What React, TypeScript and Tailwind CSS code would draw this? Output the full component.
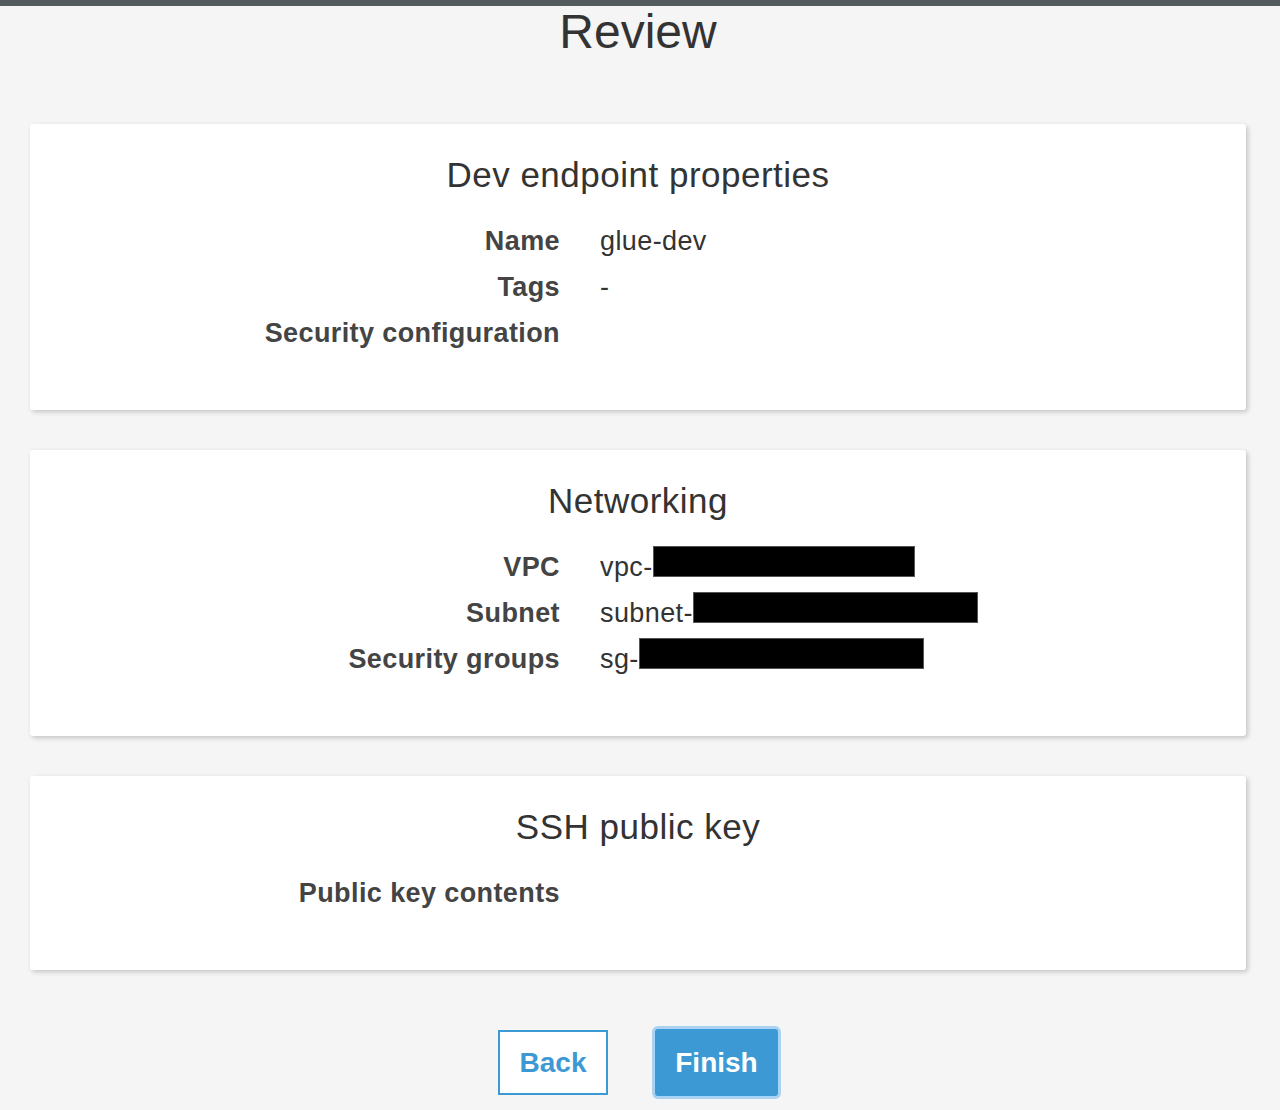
const font = { fontFamily: '"Liberation Sans", Arial, sans-serif' };

type Row = { label: string; value?: string; redact?: number };

const sections: { title: string; rows: Row[] }[] = [
  {
    title: "Dev endpoint properties",
    rows: [
      { label: "Name", value: "glue-dev" },
      { label: "Tags", value: "-" },
      { label: "Security configuration" },
    ],
  },
  {
    title: "Networking",
    rows: [
      { label: "VPC", value: "vpc-", redact: 262 },
      { label: "Subnet", value: "subnet-", redact: 285 },
      { label: "Security groups", value: "sg-", redact: 285 },
    ],
  },
  {
    title: "SSH public key",
    rows: [{ label: "Public key contents" }],
  },
];

function Card({ title, rows }: { title: string; rows: Row[] }) {
  return (
    <div className="bg-white rounded-[3px] shadow-[2px_2px_5px_rgba(0,0,0,0.2)] pt-[31px] pb-[54px]">
      <h2 className="text-center text-[35px] leading-[40px] tracking-[0.5px] text-[#333]">{title}</h2>
      <div className="mt-[23px]">
        {/* rows */}
        {rows.map((r) => (
          <div key={r.label} className="flex items-baseline h-[46px] leading-[46px] text-[27px] tracking-[0.4px]">
            <div className="w-[530px] shrink-0 text-right font-bold text-[#444]">{r.label}</div>
            <div className="ml-10 flex items-baseline text-[#333] whitespace-nowrap">
              {r.value}
              {r.redact ? (
                <span
                  className="inline-block h-[31px] bg-black border border-[#555] align-baseline translate-y-[1px]"
                  style={{ width: r.redact }}
                />
              ) : null}
            </div>
          </div>
        ))}
      </div>
    </div>
  );
}

export default function App() {
  return (
    <div className="min-h-[1110px] bg-[#f4f5f4]" style={font}>
      <div className="h-[6px] bg-[#545b5e]" />
      <div className="ml-[30px] w-[1216px]">
        <h1 className="mt-[2px] text-center text-[48px] leading-[48px] text-[#333]">Review</h1>
        <div className="mt-[68px] flex flex-col gap-10">
          {sections.map((s) => (
            <Card key={s.title} title={s.title} rows={s.rows} />
          ))}
        </div>
        <div className="mt-[59px] flex justify-center items-center gap-[47px]">
          <button className="h-[65px] w-[110px] bg-white border-2 border-[#3d99d4] text-[#3d99d4] text-[28px] font-bold">
            Back
          </button>
          <button className="h-[67px] w-[123px] bg-[#3d99d4] text-white text-[28px] font-bold rounded-[3px] ring-[3px] ring-[#a9d2f3]">
            Finish
          </button>
        </div>
      </div>
    </div>
  );
}
